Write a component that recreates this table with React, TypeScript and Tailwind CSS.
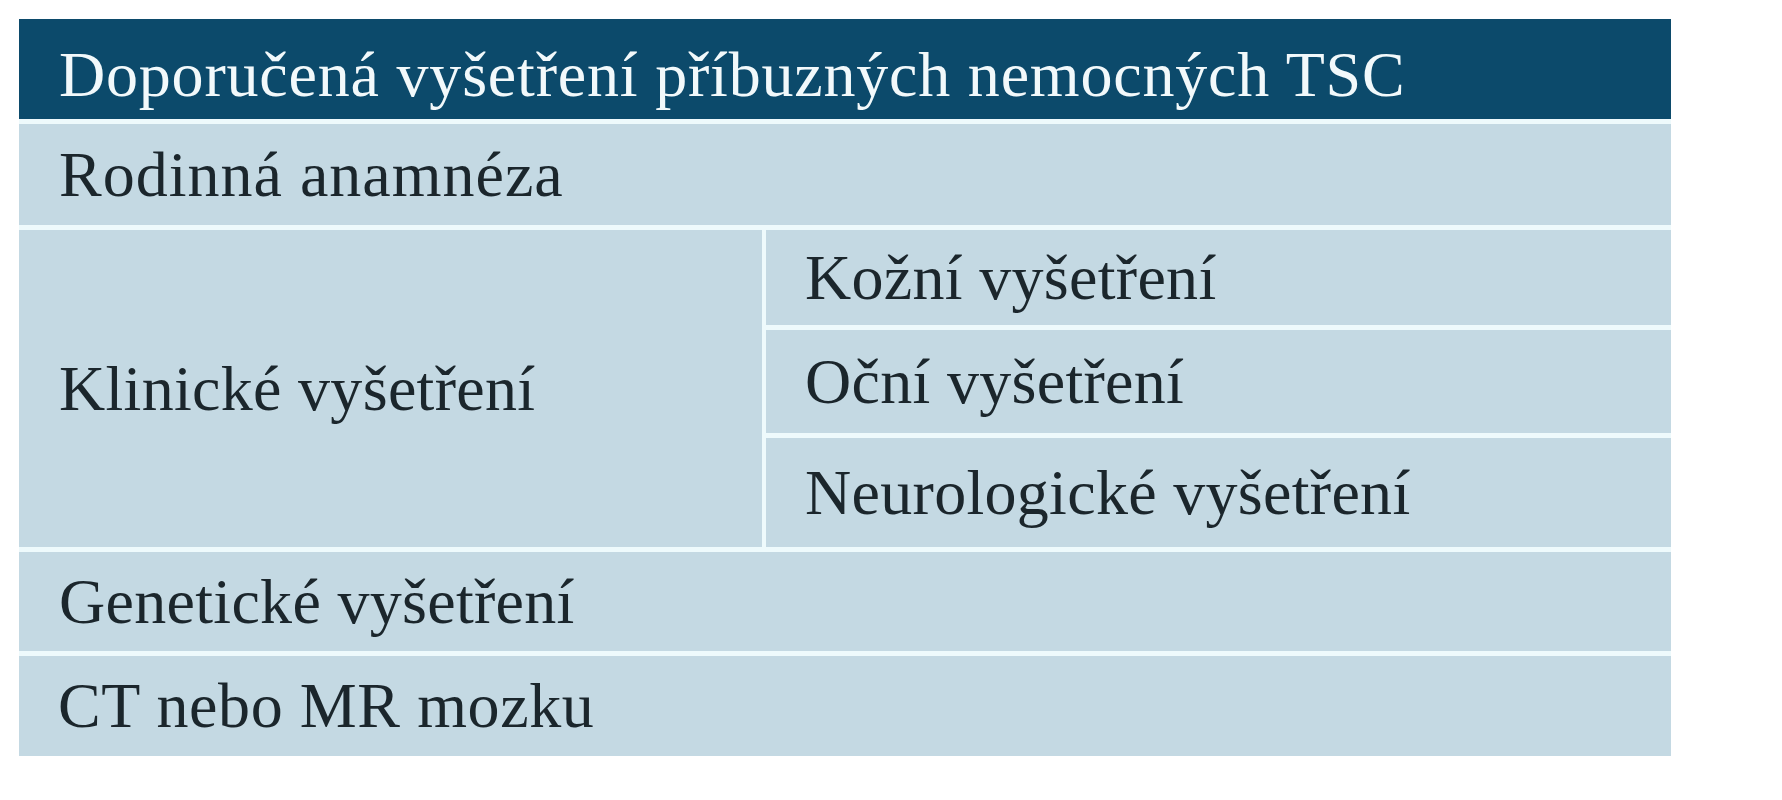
import React from 'react';

const serif = { fontFamily: '"Liberation Serif", "Times New Roman", serif' };

const cell = 'flex items-center bg-[#c4d9e3] text-[64px] leading-none tracking-[0.3px] text-[#1b262c]';

const clinical = [
  { label: 'Kožní vyšetření', h: 'h-[95px]' },
  { label: 'Oční vyšetření', h: 'h-[103px]' },
  { label: 'Neurologické vyšetření', h: 'h-[109px]' },
];

export default function App() {
  return (
    <div className="min-h-[800px] w-[1782px] bg-white pl-[19px] pt-[19px]" style={serif}>
      <div className="flex w-[1652px] flex-col gap-[5px] bg-[#eefafc]">
        <div className="flex h-[100px] items-center bg-[#0c4a6b] pl-[40px] pt-[11px] text-[64px] leading-none tracking-[0.8px] text-[#f2f9fb]">
          Doporučená vyšetření příbuzných nemocných TSC
        </div>

        <div className={`${cell} h-[101px] pl-[40px] tracking-[1px]`}>Rodinná anamnéza</div>

        <div className="flex gap-[4px]">
          <div className={`${cell} w-[743px] pl-[40px]`}>Klinické vyšetření</div>
          <div className="flex flex-1 flex-col gap-[5px]">
            {clinical.map((item) => (
              <div key={item.label} className={`${cell} ${item.h} pl-[39px]`}>
                {item.label}
              </div>
            ))}
          </div>
        </div>

        <div className={`${cell} h-[99px] pl-[40px]`}>Genetické vyšetření</div>

        <div className={`${cell} h-[100px] pl-[39px] tracking-[0.6px]`}>CT nebo MR mozku</div>
      </div>
    </div>
  );
}
